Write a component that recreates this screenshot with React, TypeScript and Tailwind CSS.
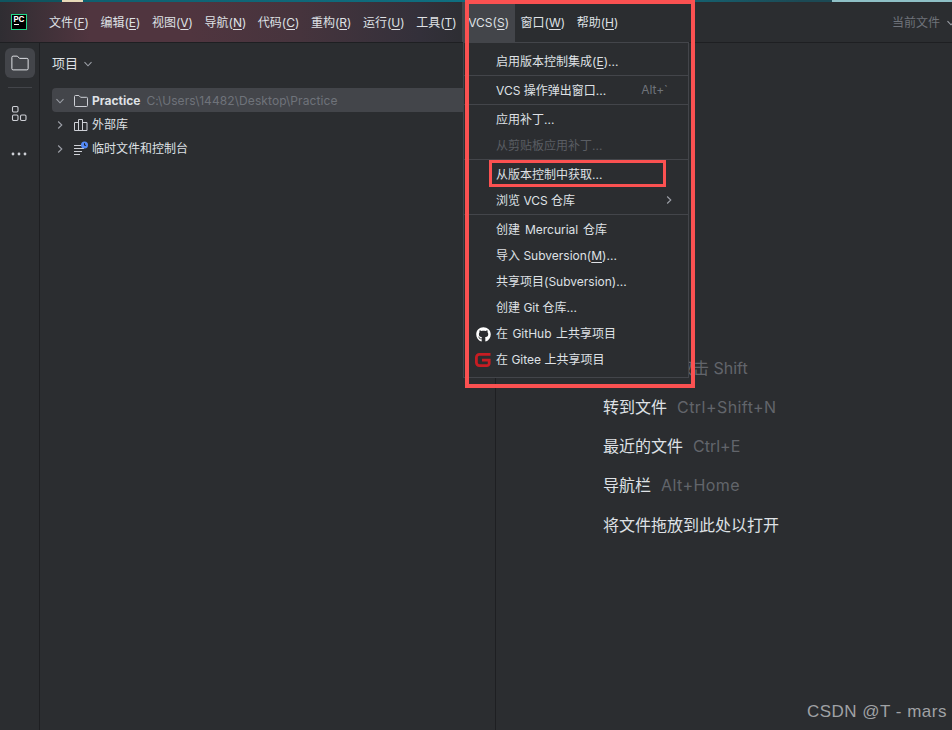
import React from 'react';
import { FaGithub } from 'react-icons/fa';

const font = { fontFamily: 'Inter, "Noto Sans CJK SC", sans-serif' };

const Mnemonic: React.FC<{ label: string; letter: string; tail?: string }> = ({ label, letter, tail }) => (
  <>
    {label}(<span className="underline underline-offset-2">{letter}</span>){tail}
  </>
);

const menus = [
  ['文件', 'F'],
  ['编辑', 'E'],
  ['视图', 'V'],
  ['导航', 'N'],
  ['代码', 'C'],
  ['重构', 'R'],
  ['运行', 'U'],
  ['工具', 'T'],
  ['VCS', 'S'],
  ['窗口', 'W'],
  ['帮助', 'H'],
];

const Sep = () => <div className="my-px h-px bg-[#43454a]" />;

const Row: React.FC<{ children: React.ReactNode; right?: React.ReactNode; icon?: React.ReactNode; dim?: boolean }> = ({
  children,
  right,
  icon,
  dim,
}) => (
  <div className={`relative flex h-[26px] items-center justify-between pl-[32px] pr-[16px] ${dim ? 'text-[#5a5d63]' : 'text-[#dfe1e5]'}`}>
    {icon && <span className="absolute left-[11px] top-[6px] flex h-4 w-4 items-center justify-center">{icon}</span>}
    <span className="whitespace-pre pt-px">{children}</span>
    {right}
  </div>
);

const Chevron: React.FC<{ open?: boolean; className?: string }> = ({ open, className }) => (
  <svg width="12" height="12" viewBox="0 0 12 12" fill="none" stroke="#9da0a8" strokeWidth="1.1" className={className}>
    <path d={open ? 'M2.5 4.2 6 7.8l3.5-3.6' : 'M4.2 2.5 7.8 6l-3.6 3.5'} />
  </svg>
);

const FolderIcon: React.FC<{ size: number; color: string }> = ({ size, color }) => (
  <svg width={size} height={size} viewBox="0 0 16 16" fill="none" stroke={color} strokeWidth={16 / size}>
    <path d="M1.5 3.5a1 1 0 0 1 1-1h3.4l1.7 1.8h5.9a1 1 0 0 1 1 1v7.2a1 1 0 0 1-1 1h-11a1 1 0 0 1-1-1z" />
  </svg>
);

const Welcome: React.FC<{ label: string; keys?: string; wide?: boolean }> = ({ label, keys, wide }) => (
  <div className="flex h-[39.25px] items-center whitespace-pre text-[16px] text-[#dfe1e5]">
    {label}
    {keys && <span className={`ml-[10px] text-[#62656b] ${wide ? 'tracking-[0.45px]' : ''}`}>{keys}</span>}
  </div>
);

export default function App() {
  return (
    <div className="relative flex h-[730px] w-[952px] flex-col overflow-hidden bg-[#2b2d30] text-[12px]" style={font}>
      {/* window title strip, the desktop shows through here */}
      <div className="h-[2px] bg-[linear-gradient(90deg,#0f5560_0,#0f5560_62px,#e8d9b8_62px,#e8d9b8_83px,#0f6070_83px,#0f7486_600px,#1c4a55_800px,#1c4a55_832px,#8fc0c6_832px)]" />
      <header className="flex h-[40px] items-center bg-[linear-gradient(90deg,#2f2d32_0,#50353f_90px,#50353f_190px,#46343d_300px,#33303a_420px,#2b2d30_480px)]">
        <div className="ml-[11px] mr-[16px] flex h-[16px] w-[16px] shrink-0 flex-col items-center border border-[#21d789] bg-black">
          <span className="text-[8px] font-bold leading-[8px] text-white">PC</span>
          <span className="mr-[5px] mt-[1px] h-px w-[5px] bg-white" />
        </div>
        <nav className="ml-[0.25px] flex h-full items-stretch text-[#dfe1e5]">
          {menus.map(([label, letter]) => (
            <div key={letter} className={`flex items-center whitespace-pre px-[5.75px] pt-px ${letter === 'S' ? 'bg-[#43454a]' : ''}`}>
              <Mnemonic label={label} letter={letter} />
            </div>
          ))}
        </nav>
        <div className="-mr-[4.5px] ml-auto flex items-center gap-[4.5px] pt-px text-[#6f737a]">
          <span>当前文件</span>
          <Chevron open />
        </div>
      </header>
      <div className="h-px bg-[#1e1f22]" />

      <div className="flex min-h-0 flex-1">
        {/* tool window rail */}
        <aside className="flex w-[40px] shrink-0 flex-col items-center border-r border-[#1e1f22] pt-[5px]">
          <div className="flex h-[30px] w-[30px] items-center justify-center rounded-[6px] bg-[#43454a]">
            <FolderIcon size={20} color="#dfe1e5" />
          </div>
          <div className="mt-[9px] h-px w-[24px] bg-[#43454a]" />
          <svg className="-ml-[2px] mt-[17px]" width="18" height="18" viewBox="0 0 18 18" fill="none" stroke="#ced0d6" strokeWidth="1.1">
            <rect x="2.5" y="1.5" width="5.5" height="5.5" rx="1.2" />
            <rect x="2.5" y="10" width="5.5" height="5.5" rx="1.2" />
            <rect x="10.5" y="10" width="5.5" height="5.5" rx="1.2" />
          </svg>
          <svg className="-ml-[2px] mt-[28px]" width="18" height="6" viewBox="0 0 18 6" fill="#ced0d6">
            <circle cx="3" cy="3" r="1.4" />
            <circle cx="9" cy="3" r="1.4" />
            <circle cx="15" cy="3" r="1.4" />
          </svg>
        </aside>

        {/* project panel */}
        <section className="flex w-[456px] shrink-0 flex-col border-r border-[#1e1f22] pl-[12px]">
          <div className="flex h-[41px] items-center gap-[4px] pt-px text-[13px] text-[#dfe1e5]">
            项目
            <Chevron open />
          </div>
          <div className="mt-[4px]">
            <div className="flex h-[24px] items-center rounded-l-[4px] bg-[#43454a] pl-[1px] pt-px">
              <Chevron open className="ml-[1px]" />
              <span className="ml-[7px]"><FolderIcon size={16} color="#ced0d6" /></span>
              <span className="ml-[3px] font-bold text-[#dfe1e5]">Practice</span>
              <span className="ml-[6px] tracking-[0.08px] text-[#6f737a]">C:\Users\14482\Desktop\Practice</span>
            </div>
            <div className="flex h-[24px] items-center pl-[1px] pt-px text-[#dfe1e5]">
              <Chevron className="ml-[1px]" />
              <svg className="ml-[7px]" width="16" height="16" viewBox="0 0 16 16" fill="none" stroke="#ced0d6">
                <path d="M1.5 13.5V5.5h4v8M5.5 13.5V2.5h4v11M9.5 13.5V5.5h4.5v8zM1.5 13.5h12.5" />
              </svg>
              <span className="ml-[3px]">外部库</span>
            </div>
            <div className="flex h-[24px] items-center pl-[1px] pt-px text-[#dfe1e5]">
              <Chevron className="ml-[1px]" />
              <svg className="ml-[7px]" width="16" height="16" viewBox="0 0 16 16" fill="none">
                <path d="M1 4.5h8M1 7.5h10M1 10.5h8M1 13.5h6" stroke="#ced0d6" />
                <circle cx="11.5" cy="4" r="3.5" fill="#548af7" />
                <path d="M11.5 2.2V4.3h1.6" stroke="#1e1f22" />
              </svg>
              <span className="ml-[3px]">临时文件和控制台</span>
            </div>
          </div>
        </section>

        {/* empty editor hints */}
        <main className="flex-1 pl-[107px] pt-[305px]">
          <Welcome label="随处搜索" keys="双击 Shift" />
          <Welcome label="转到文件" keys="Ctrl+Shift+N" wide />
          <Welcome label="最近的文件" keys="Ctrl+E" />
          <Welcome label="导航栏" keys="Alt+Home" wide />
          <Welcome label="将文件拖放到此处以打开" />
        </main>
      </div>

      {/* VCS dropdown */}
      <div className="absolute left-[463px] top-[42px] w-[226px] border border-[#43454a] bg-[#2b2d30] py-[5px]">
        <Row><Mnemonic label="启用版本控制集成" letter="E" tail="..." /></Row>
        <Sep />
        <Row right={<span className="mr-[4px] text-[#6f737a]">Alt+`</span>}>VCS 操作弹出窗口...</Row>
        <Sep />
        <Row>应用补丁...</Row>
        <Row dim>从剪贴板应用补丁...</Row>
        <Sep />
        <Row>从版本控制中获取...</Row>
        <Row right={<Chevron className="-mr-[3px]" />}>浏览 VCS 仓库</Row>
        <Sep />
        <Row><span className="[word-spacing:1.5px]">创建 Mercurial 仓库</span></Row>
        <Row><Mnemonic label="导入 Subversion" letter="M" tail="..." /></Row>
        <Row>共享项目(Subversion)...</Row>
        <Row>创建 Git 仓库...</Row>
        <Row icon={<FaGithub size={15} color="#ffffff" />}><span className="[word-spacing:1px]">在 GitHub 上共享项目</span></Row>
        <Row
          icon={
            <svg width="16" height="16" viewBox="0 0 16 16" fill="none" stroke="#c71d23" strokeWidth="2.8">
              <path d="M15.5 2.4H4.4a3 3 0 0 0-3 3v5.2a3 3 0 0 0 3 3h7.4a2.4 2.4 0 0 0 2.4-2.4V8.2H7" />
            </svg>
          }
        >
          在 Gitee 上共享项目
        </Row>
      </div>

      {/* red annotations drawn over the screenshot */}
      <div className="pointer-events-none absolute left-[465px] top-0 h-[388px] w-[230px] border-[4px] border-[#fb5151]" />
      <div className="pointer-events-none absolute left-[489px] top-[160px] h-[27px] w-[177px] border-[3px] border-[#fb5151]" />

      <div className="absolute bottom-[6px] right-[5px] text-[17px] tracking-[0.5px] text-[#a0a2a5]" style={{ fontFamily: '"Liberation Sans", sans-serif' }}>
        CSDN @T - mars
      </div>
    </div>
  );
}
